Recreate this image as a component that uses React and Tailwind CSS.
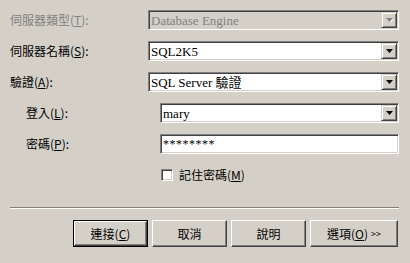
import React from 'react'

const FONT = { fontFamily: '"Noto Sans CJK TC", "Liberation Sans", sans-serif' }
const SERIF = { fontFamily: '"Liberation Serif", "Noto Sans CJK TC", serif' }

// 凹陷的輸入框
const Sunken = ({ className = '', children }) => (
  <div
    className={`h-[20px] border border-t-[#808080] border-l-[#808080] border-b-white border-r-white shadow-[inset_1px_1px_0_#404040,inset_-1px_-1px_0_#d4d0c8] p-[1px] flex items-center ${className}`}
  >
    {children}
  </div>
)

const Arrow = ({ disabled }) => (
  <div className="w-[16px] h-[16px] shrink-0 bg-[#d4d0c8] border border-t-[#d4d0c8] border-l-[#d4d0c8] border-b-[#404040] border-r-[#404040] shadow-[inset_1px_1px_0_#fff,inset_-1px_-1px_0_#808080] flex items-center justify-center">
    <svg width="7" height="5" viewBox="0 0 7 5">
      {disabled && <path d="M1 1h7L4.5 4.5z" fill="#fff" />}
      <path d="M0 0h7L3.5 4z" fill={disabled ? '#808080' : '#000'} />
    </svg>
  </div>
)

const Combo = ({ value, disabled, className = '' }) => (
  <Sunken className={`${disabled ? 'bg-[#d4d0c8]' : 'bg-white'} ${className}`}>
    <span
      className={`flex-1 pl-[1px] text-[13px] leading-none ${disabled ? 'text-[#808080]' : 'text-black'}`}
      style={SERIF}
    >
      {value}
    </span>
    <Arrow disabled={disabled} />
  </Sunken>
)

const Label = ({ text, k, indent, disabled }) => (
  <div className={`${indent ? 'w-[150px] pl-[16px]' : 'w-[138px]'} shrink-0 text-[12px] ${disabled ? 'text-[#808080]' : 'text-black'}`}>
    {text}(<span className="underline">{k}</span>):
  </div>
)

const Btn = ({ children, isDefault, wide }) => (
  <div className={`${wide ? 'w-[88px]' : 'w-[75px]'} h-[27px] ${isDefault ? 'border border-black' : ''}`}>
    <div className="w-full h-full bg-[#d4d0c8] border border-t-white border-l-white border-b-[#404040] border-r-[#404040] shadow-[inset_-1px_-1px_0_#808080] flex items-center justify-center text-[12px] text-black">
      {children}
    </div>
  </div>
)

export default function App() {
  return (
    <div className="w-[410px] h-[263px] bg-[#d4d0c8] pt-[10px] pl-[10px] pr-[11px]" style={FONT}>
      <div className="flex flex-col gap-[11px]">
        <div className="flex items-center">
          <Label text="伺服器類型" k="T" disabled />
          <Combo value="Database Engine" disabled className="flex-1" />
        </div>
        <div className="flex items-center">
          <Label text="伺服器名稱" k="S" />
          <Combo value="SQL2K5" className="flex-1" />
        </div>
        <div className="flex items-center">
          <Label text="驗證" k="A" />
          <Combo value="SQL Server 驗證" className="flex-1" />
        </div>
        <div className="flex items-center">
          <Label text="登入" k="L" indent />
          <Combo value="mary" className="flex-1" />
        </div>
        <div className="flex items-center">
          <Label text="密碼" k="P" indent />
          <Sunken className="flex-1 bg-white">
            <span className="pl-[1px] text-[12px] leading-none tracking-[0.5px]" style={SERIF}>********</span>
          </Sunken>
        </div>
      </div>

      <div className="flex items-center h-[12px] mt-[15px] ml-[151px]">
        <div className="w-[12px] h-[12px] bg-white border border-t-[#808080] border-l-[#808080] border-b-white border-r-white shadow-[inset_1px_1px_0_#404040,inset_-1px_-1px_0_#d4d0c8]" />
        <span className="ml-[6px] text-[12px] leading-none">記住密碼(<span className="underline">M</span>)</span>
      </div>

      <div className="mt-[26px] h-[2px] border-t border-t-[#808080] border-b border-b-white" />

      <div className="flex gap-[4px] mt-[11px] ml-[63px]">
        <Btn isDefault>連接(<span className="underline">C</span>)</Btn>
        <Btn>取消</Btn>
        <Btn>說明</Btn>
        <Btn wide>選項(<span className="underline">O</span>) <span className="ml-[3px] text-[9px]">&gt;&gt;</span></Btn>
      </div>
    </div>
  )
}
